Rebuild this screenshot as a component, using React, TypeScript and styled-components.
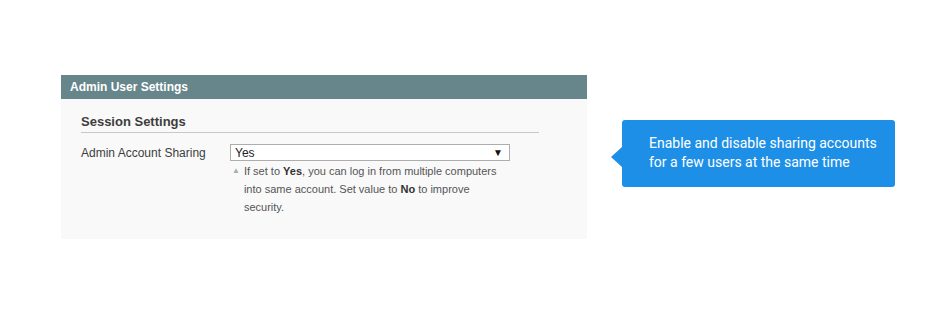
import styled, { createGlobalStyle } from "styled-components";

const GlobalStyle = createGlobalStyle`
  body {
    margin: 0;
    background: #ffffff;
    font-family: "Liberation Sans", Arial, sans-serif;
  }
`;

export default function App() {
  return (
    <>
      <GlobalStyle />
      <StyledPage>
        <StyledPanel>
          <StyledPanelHeader>Admin User Settings</StyledPanelHeader>
          <StyledPanelBody>
            <StyledSectionTitle>Session Settings</StyledSectionTitle>
            <StyledFieldRow>
              <StyledLabel>Admin Account Sharing</StyledLabel>
              <StyledControl>
                <StyledSelect>
                  <span>Yes</span>
                  <StyledCaret>▼</StyledCaret>
                </StyledSelect>
                <StyledNote>
                  <StyledNoteIcon>▲</StyledNoteIcon>
                  <span>
                    If set to <b>Yes</b>, you can log in from multiple computers
                    into same account. Set value to <b>No</b> to improve security.
                  </span>
                </StyledNote>
              </StyledControl>
            </StyledFieldRow>
          </StyledPanelBody>
        </StyledPanel>
        <StyledTooltip>
          Enable and disable sharing accounts for a few users at the same time
        </StyledTooltip>
      </StyledPage>
    </>
  );
}

const StyledPage = styled.div`
  display: flex;
  align-items: flex-start;
  padding: 75px 0 0 61px;
  height: 318px;
  box-sizing: border-box;
`;

const StyledPanel = styled.div`
  width: 526px;
  height: 164px;
  background: #f9f9f9;
`;

const StyledPanelHeader = styled.div`
  height: 24px;
  line-height: 25px;
  padding-left: 9px;
  background: #66868b;
  color: #ffffff;
  font-size: 12px;
  font-weight: bold;
`;

const StyledPanelBody = styled.div`
  padding: 15px 48px 0 20px;
`;

const StyledSectionTitle = styled.div`
  font-size: 13px;
  font-weight: bold;
  color: #3d3d3d;
  line-height: 16px;
  padding-bottom: 2px;
  border-bottom: 1px solid #c8c8c8;
`;

const StyledFieldRow = styled.div`
  display: flex;
  margin-top: 11px;
`;

const StyledLabel = styled.div`
  width: 149px;
  flex-shrink: 0;
  font-size: 12px;
  color: #3d3d3d;
  line-height: 18px;
`;

const StyledControl = styled.div`
  width: 280px;
`;

const StyledSelect = styled.div`
  display: flex;
  justify-content: space-between;
  align-items: center;
  height: 17px;
  box-sizing: border-box;
  border: 1px solid #adadad;
  background: #ffffff;
  padding: 0 6px 0 4px;
  font-size: 12px;
  color: #222222;
`;

const StyledCaret = styled.span`
  font-size: 10px;
  color: #111111;
`;

const StyledNote = styled.div`
  display: flex;
  gap: 4px;
  margin-top: 1px;
  padding-left: 2px;
  width: 275px;
  font-size: 11px;
  line-height: 18px;
  color: #555555;

  b {
    color: #333333;
  }
`;

const StyledNoteIcon = styled.span`
  font-size: 8px;
  color: #a3b0b0;
  flex-shrink: 0;
`;

const StyledTooltip = styled.div`
  position: relative;
  margin: 45px 0 0 35px;
  width: 273px;
  height: 67px;
  box-sizing: border-box;
  padding: 14px 10px 0 27px;
  background: #1e8fe6;
  border-radius: 3px;
  color: #ffffff;
  font-family: Roboto, "Liberation Sans", sans-serif;
  font-size: 14px;
  line-height: 19px;

  &::before {
    content: "";
    position: absolute;
    left: -11px;
    top: 27px;
    border-style: solid;
    border-width: 10px 11px 10px 0;
    border-color: transparent #1e8fe6 transparent transparent;
  }
`;
